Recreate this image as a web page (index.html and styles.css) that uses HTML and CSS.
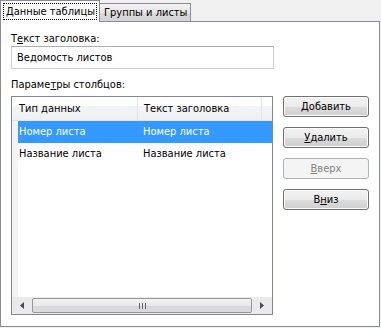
FILE: index.html
```html
<!DOCTYPE html>
<html lang="ru">
<head>
  <meta charset="UTF-8">
  <title>Параметры таблицы</title>
  <link rel="stylesheet" href="styles.css">
</head>
<body>
  <div class="dialog">
    <div class="tabs">
      <div class="tab active"><span class="focus">Данные таблицы</span></div>
      <div class="tab">Группы и листы</div>
    </div>
    <div class="panel">
      <div class="label">Т<u>е</u>кст заголовка:</div>
      <input class="field" type="text" value="Ведомость листов">
      <div class="label params">Параме<u>т</u>ры столбцов:</div>
      <div class="row">
        <div class="list">
          <div class="list-head">
            <div class="col first">Тип данных</div>
            <div class="col">Текст заголовка</div>
            <div class="col rest"></div>
          </div>
          <div class="list-body">
            <div class="item selected">
              <div class="cell first">Номер листа</div>
              <div class="cell">Номер листа</div>
            </div>
            <div class="item">
              <div class="cell first">Название листа</div>
              <div class="cell">Название листа</div>
            </div>
          </div>
          <div class="hscroll">
            <div class="arrow left"><svg width="4" height="7" viewBox="0 0 4 7"><path d="M4 0 L0 3.5 L4 7 Z" fill="#4d4d4d"/></svg></div>
            <div class="thumb"><span class="grip"></span></div>
            <div class="arrow right"><svg width="4" height="7" viewBox="0 0 4 7"><path d="M0 0 L4 3.5 L0 7 Z" fill="#4d4d4d"/></svg></div>
          </div>
        </div>
        <div class="buttons">
          <button class="btn"><u>Д</u>обавить</button>
          <button class="btn"><u>У</u>далить</button>
          <button class="btn" disabled><u>В</u>верх</button>
          <button class="btn">В<u>н</u>из</button>
        </div>
      </div>
    </div>
  </div>
</body>
</html>
```

FILE: styles.css
```css
body {
  margin: 0;
  background-color: #f0f0f0;
  font-family: "DejaVu Sans Condensed", "DejaVu Sans", sans-serif;
  font-stretch: condensed;
  font-size: 11px;
  color: #000;
}

u {
  text-decoration: underline;
  text-underline-offset: 1px;
}

.dialog {
  width: 380px;
  height: 327px;
  display: flex;
  flex-direction: column;
}

.tabs {
  display: flex;
  align-items: flex-end;
  height: 21px;
  position: relative;
  z-index: 1;
}

.tab {
  height: 17px;
  padding: 0 3px 0 4px;
  border: 1px solid #898c95;
  border-bottom: none;
  background: linear-gradient(#f2f2f2, #e6e6e6 50%, #d9d9d9 51%, #d5d5d5);
  line-height: 17px;
  margin-left: -1px;
  white-space: nowrap;
}

.tab.active {
  height: 21px;
  margin-left: 0;
  padding: 0 2px;
  background: #fff;
  position: relative;
  top: 1px;
  z-index: 2;
  width: 94px;
}

.tab.active .focus {
  display: block;
  margin-top: 2px;
  height: 15px;
  line-height: 15px;
  padding: 0 2px;
  border: 1px dotted #000;
}

.panel {
  flex: 1;
  background: #fff;
  border: 1px solid #898c95;
  padding: 10px 10px 11px 10px;
  display: flex;
  flex-direction: column;
}

.label {
  height: 13px;
  line-height: 13px;
}

.field {
  margin: 1px 0 0 0;
  width: 263px;
  height: 23px;
  box-sizing: border-box;
  border: 1px solid #cfcfcf;
  border-top-color: #abadb3;
  font: inherit;
  padding: 0 5px;
  outline: none;
}

.params {
  margin-top: 9px;
}

.row {
  display: flex;
  gap: 10px;
  margin-top: 5px;
  flex: 1;
}

.list {
  width: 263px;
  box-sizing: border-box;
  border: 1px solid #828790;
  display: flex;
  flex-direction: column;
}

.list-head {
  display: flex;
  height: 23px;
  background: linear-gradient(#ffffff, #ffffff 40%, #f3f4f6 41%, #eff0f2);
  border-bottom: 1px solid #e5e5e5;
}

.col {
  line-height: 23px;
  padding-left: 6px;
  border-right: 1px solid #e3e4e6;
  width: 117px;
  white-space: nowrap;
}

.col.first {
  width: 118px;
  padding-left: 7px;
}

.col.rest {
  flex: 1;
  width: auto;
  border-right: none;
}

.list-body {
  flex: 1;
  background: linear-gradient(90deg, #f4f4f4 6px, #fff 6px);
}

.item {
  display: flex;
  height: 22px;
  line-height: 22px;
  margin-left: 6px;
}

.item.selected {
  background: #3399ff;
  color: #fff;
}

.cell {
  width: 124px;
  white-space: nowrap;
}

.cell.first {
  padding-left: 1px;
  width: 124px;
}

.hscroll {
  height: 17px;
  display: flex;
  background: #eaeaea;
  padding: 1px 0;
  box-sizing: border-box;
}

.arrow {
  width: 20px;
  display: flex;
  align-items: center;
  justify-content: center;
}

.thumb {
  flex: 1;
  border: 1px solid #979797;
  border-radius: 2px;
  background: linear-gradient(#f3f3f3, #e8e8e8 50%, #d6d6d6 51%, #dcdcdc);
  display: flex;
  align-items: center;
  justify-content: center;
}

.grip {
  width: 7px;
  height: 6px;
  background: repeating-linear-gradient(90deg, #666 0 1px, transparent 1px 3px);
}

.buttons {
  display: flex;
  flex-direction: column;
  gap: 10px;
}

.btn {
  width: 86px;
  height: 21px;
  padding: 0;
  font: inherit;
  color: #000;
  border: 1px solid #707070;
  border-radius: 3px;
  background: linear-gradient(#f2f2f2, #ebebeb 50%, #dddddd 51%, #cfcfcf);
  box-shadow: inset 0 0 0 1px #fcfcfc;
}

.btn:disabled {
  color: #838383;
  border-color: #adb2b5;
  background: #f4f4f4;
  box-shadow: none;
}
```
